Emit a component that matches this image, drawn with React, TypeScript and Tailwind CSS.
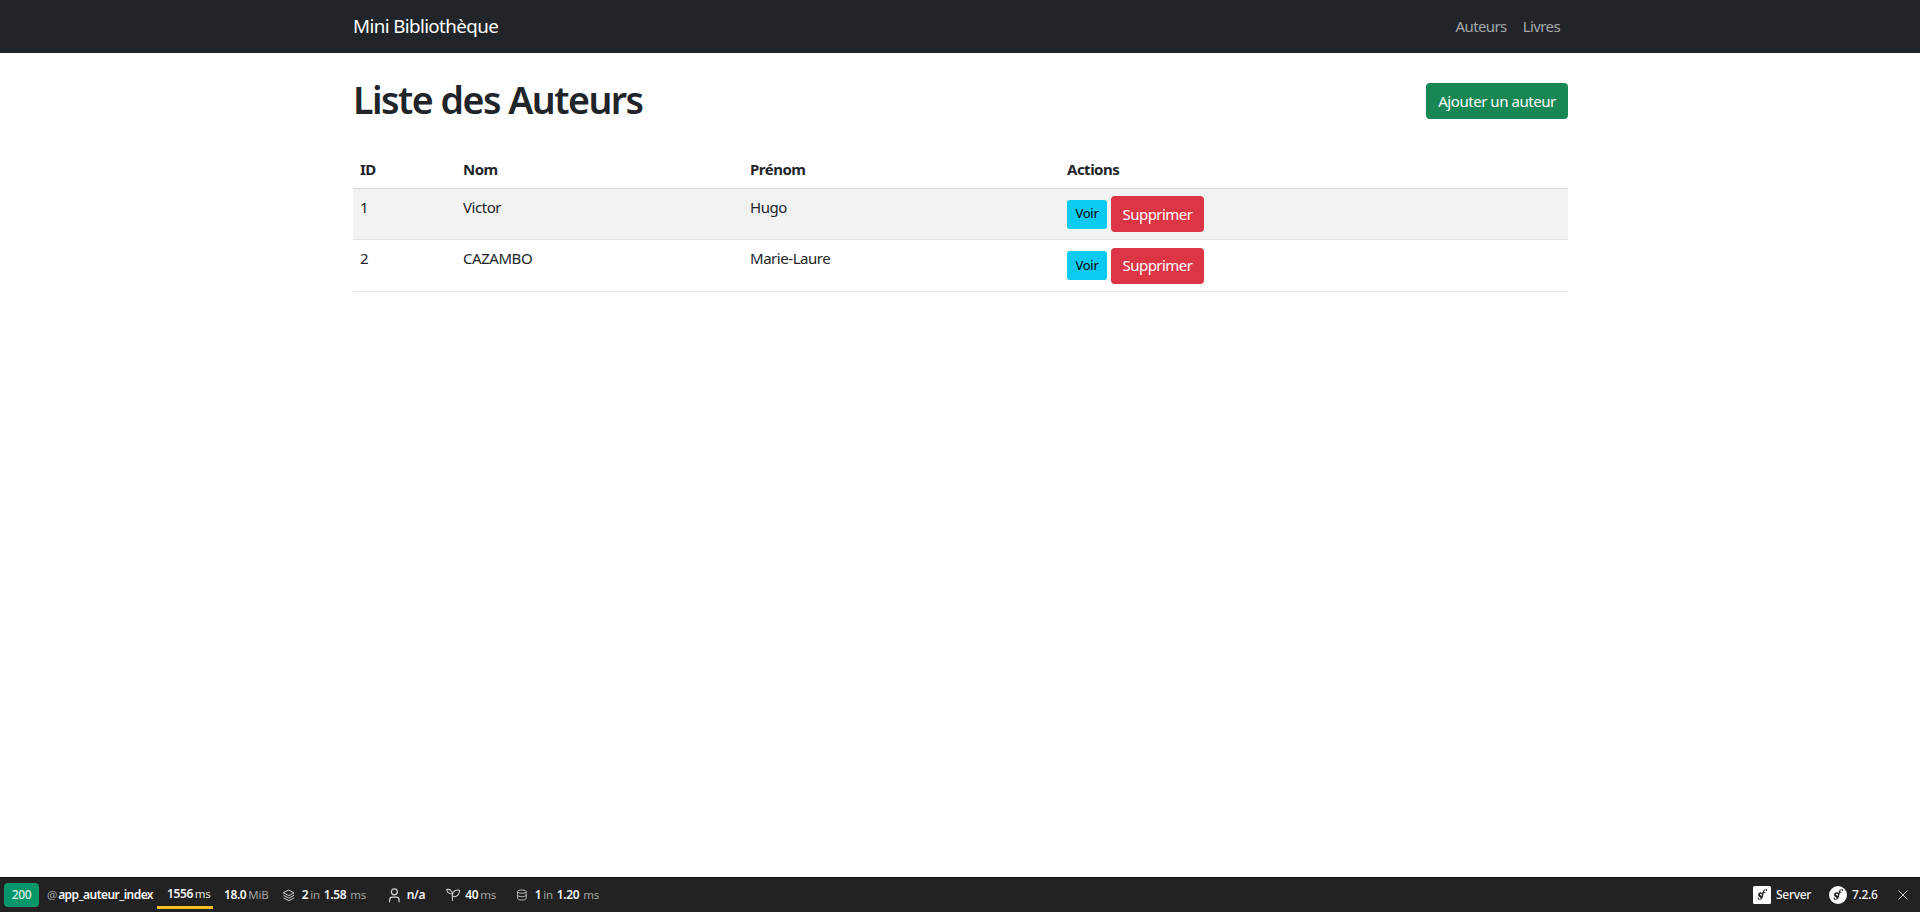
import React from "react";

const COLS = "grid grid-cols-[103px_287px_317px_1fr]";

function SfGlyph({ fill }: { fill: string }) {
  return (
    <path
      fill={fill}
      d="M17.6 3.6c-1.9.1-3.2 1.2-4 3-.5 1-.8 2-1 2.7-.6-.4-1.1-.7-1.9-.8-1.4-.2-2.9.6-3.6 1.9-.8 1.4-.1 2.8.8 3.6 1 .9 2.3 1.3 2.2 2.5 0 .4-.3.8-.6 1-.3.2-.9.2-1.5.1-.3 0-.5-.4-.3-.7.2-.3.6-.4.5-.9-.1-.5-.7-.8-1.2-.6-.6.2-.9.8-.8 1.4.2 1.2 1.6 1.9 3 1.7 1.8-.3 3.1-1.4 3.7-3.1.2-.9.4-1.9.7-3l.9-3.3 1.7.1.4-1.1-1.8-.1c.2-1 .6-2.2 1.2-3 .3-.3.8-.6 1.2-.4.2.1.2.3.1.5-.2.4-.4.6-.4 1 .1.5.6.7 1 .6.6-.1 1-.7.9-1.2-.1-1-1.3-1.6-2.5-1.5zm-6.8 6.8c.4.1.8.4 1.2.9l-.6 2.1c-.5-.6-1.9-1.3-2.2-2-.1-.4.1-.8.5-1 .3-.1.7-.1 1.1 0z"
    />
  );
}

function SfSquare() {
  return (
    <svg viewBox="0 0 24 24" className="w-[18px] h-[18px] shrink-0">
      <rect width="24" height="24" rx="2" fill="#fff" />
      <SfGlyph fill="#222222" />
    </svg>
  );
}

function SfRound() {
  return (
    <svg viewBox="0 0 24 24" className="w-[18px] h-[18px] shrink-0">
      <circle cx="12" cy="12" r="12" fill="#fff" />
      <SfGlyph fill="#222222" />
    </svg>
  );
}

function Val({ children }: { children: React.ReactNode }) {
  return <span className="text-[#f5f5f5] font-semibold text-[12px] tracking-[-0.4px]">{children}</span>;
}

function Unit({ children, className = "" }: { children: React.ReactNode; className?: string }) {
  return <span className={`text-[#a3a3a3] text-[11.5px] tracking-[-0.2px] ${className}`}>{children}</span>;
}

function Row({ id, nom, prenom, striped }: { id: string; nom: string; prenom: string; striped?: boolean }) {
  return (
    <div className={`${COLS} border-b border-[#dee2e6] text-[#212529] ${striped ? "bg-[#f2f2f2] h-[51px]" : "h-[52px]"}`}>
      <div className="pl-[7px] pt-[6px] leading-[24px]">{id}</div>
      <div className="pl-[7px] pt-[6px] leading-[24px]">{nom}</div>
      <div className="pl-[7px] pt-[6px] leading-[24px]">{prenom}</div>
      <div className="pl-[7px] flex items-center gap-[4px]">
        <button className="h-[29px] w-[40px] rounded-[3px] bg-[#0dcaf0] text-black text-[13px] tracking-[-0.3px]">Voir</button>
        <button className="h-[36px] w-[93px] rounded-[4px] bg-[#dc3545] text-white text-[15px] tracking-[-0.55px]">Supprimer</button>
      </div>
    </div>
  );
}

export default function App() {
  return (
    <div className="font-['Noto_Sans',sans-serif] h-[912px] bg-white flex flex-col text-[15px] tracking-[-0.45px] overflow-hidden">
      <nav className="h-[53px] bg-[#212529] shrink-0 pl-[353px] pr-[360px] flex items-center justify-between">
        <span className="text-white text-[18.75px] tracking-[-0.6px]">Mini Bibliothèque</span>
        <div className="flex gap-[16px] text-[15px] text-[#a6a8aa] tracking-[-0.6px]">
          <span>Auteurs</span>
          <span>Livres</span>
        </div>
      </nav>
      <main className="flex-1 pl-[353px] pr-[352px]">
        <div className="flex justify-between h-[103px] pt-[30px]">
          <h1 className="text-[37.5px] font-semibold text-[#212529] leading-[45px] -mt-[6px] tracking-[-1.5px]">Liste des Auteurs</h1>
          <button className="h-[36px] w-[142px] rounded-[4px] bg-[#198754] text-white text-[15px] tracking-[-0.45px]">Ajouter un auteur</button>
        </div>
        <div className={`${COLS} border-b border-[#d5d7da] h-[33px] font-bold text-[#212529] tracking-[-0.5px]`}>
          <div className="pl-[7px] leading-[26px]">ID</div>
          <div className="pl-[7px] leading-[26px]">Nom</div>
          <div className="pl-[7px] leading-[26px]">Prénom</div>
          <div className="pl-[7px] leading-[26px]">Actions</div>
        </div>
        <Row id="1" nom="Victor" prenom="Hugo" striped />
        <Row id="2" nom="CAZAMBO" prenom="Marie-Laure" />
      </main>
      <footer className="h-[35px] bg-[#222222] shrink-0 flex items-center text-[12px] text-[#f5f5f5] border-t border-[#111111] tracking-[-0.3px]">
        <span className="ml-[4px] h-[24px] w-[35px] rounded-[4px] bg-[#059669] text-[#d8f0e8] font-medium flex items-center justify-center">200</span>
        <span className="ml-[8px] w-[106px] flex items-center gap-[1px] whitespace-nowrap">
          <Unit>@</Unit>
          <span className="text-[#f5f5f5] font-semibold text-[12px] tracking-[-0.55px]">app_auteur_index</span>
        </span>
        <span className="ml-[4px] w-[56px] h-[31px] self-start pl-[10px] flex items-center gap-[2px] border-b-[3px] border-[#fbbf24] pt-[4px]">
          <Val>1556</Val>
          <span className="text-[#e5e5e5] text-[11.5px]">ms</span>
        </span>
        <span className="ml-[11px] w-[43px] flex items-center gap-[2px]">
          <Val>18.0</Val>
          <Unit>MiB</Unit>
        </span>
        <span className="ml-[16px] w-[83px] flex items-center">
          <svg viewBox="2 2 20 20" className="w-[15px] h-[15px] mr-[7px]" fill="none" stroke="#d4d4d4" strokeWidth="1.7" strokeLinejoin="round" strokeLinecap="round">
            <path d="M12 3l9 4.6-9 4.6-9-4.6z" />
            <path d="M3.5 12l8.5 4.4 8.5-4.4" />
            <path d="M3.5 16.4l8.5 4.4 8.5-4.4" />
          </svg>
          <Val>2</Val>
          <Unit className="ml-[2px]">in</Unit>
          <span className="ml-[4px]"><Val>1.58</Val></span>
          <Unit className="ml-[4px]">ms</Unit>
        </span>
        <span className="ml-[23px] w-[36px] flex items-center">
          <svg viewBox="4 2 16 21" className="w-[11px] h-[15px] mr-[7px]" fill="none" stroke="#d4d4d4" strokeWidth="1.8" strokeLinecap="round">
            <circle cx="12" cy="7" r="4.5" />
            <path d="M5 22v-3a4 4 0 0 1 4-4h6a4 4 0 0 1 4 4v3" />
          </svg>
          <Val>n/a</Val>
        </span>
        <span className="ml-[21px] w-[50px] flex items-center">
          <svg viewBox="1 3 22 19" className="w-[15px] h-[14px] mr-[5px]" fill="none" stroke="#d4d4d4" strokeWidth="1.6" strokeLinecap="round" strokeLinejoin="round">
            <path d="M11 21v-10" />
            <path d="M11 11C7 11 3 9 2 4c5-1 9 2 9 7z" />
            <path d="M11 13c1 3 6 3 9-1 2-3 2-6 2-7-6-1-11 2-11 8z" />
          </svg>
          <Val>40</Val>
          <Unit className="ml-[2px]">ms</Unit>
        </span>
        <span className="ml-[21px] w-[82px] flex items-center">
          <svg viewBox="2 0.5 20 23" className="w-[14px] h-[16px] mr-[8px]" fill="none" stroke="#d4d4d4" strokeWidth="1.7">
            <ellipse cx="12" cy="5" rx="9" ry="3.5" />
            <path d="M3 5v14c0 2 4 3.5 9 3.5s9-1.5 9-3.5V5" />
            <path d="M3 12c0 2 4 3.5 9 3.5s9-1.5 9-3.5" />
          </svg>
          <Val>1</Val>
          <Unit className="ml-[2px]">in</Unit>
          <span className="ml-[4px]"><Val>1.20</Val></span>
          <Unit className="ml-[4px]">ms</Unit>
        </span>
        <div className="ml-auto flex items-center">
          <SfSquare />
          <span className="ml-[5px] w-[34px] whitespace-nowrap font-medium">Server</span>
          <span className="ml-[19px]"><SfRound /></span>
          <span className="ml-[5px] w-[25px] font-medium">7.2.6</span>
          <svg viewBox="0 0 24 24" className="w-[10px] h-[10px] ml-[21px] mr-[12px]" fill="none" stroke="#cccccc" strokeWidth="2.4">
            <path d="M1 1l22 22M23 1L1 23" />
          </svg>
        </div>
      </footer>
    </div>
  );
}
